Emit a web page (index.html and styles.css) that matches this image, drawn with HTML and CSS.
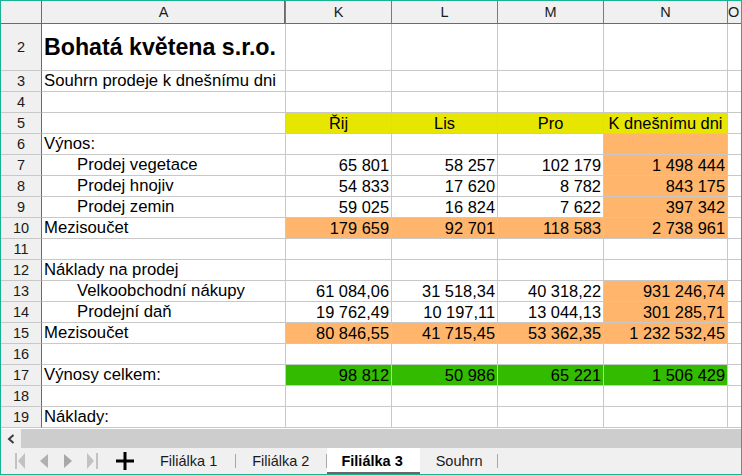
FILE: index.html
```html
<!DOCTYPE html>
<html lang="cs">
<head>
<meta charset="utf-8">
<title>Bohatá květena s.r.o.</title>
<link rel="stylesheet" href="styles.css">
</head>
<body>
<div class="app">
  <div class="sheet">
    <div class="corner"></div>
    <div class="ch frz">A</div><div class="ch">K</div><div class="ch">L</div><div class="ch">M</div><div class="ch">N</div><div class="ch last">O</div>

    <div class="rh">2</div><div class="c title">Bohatá květena s.r.o.</div><div class="c"></div><div class="c"></div><div class="c"></div><div class="c"></div><div class="c last"></div>
    <div class="rh">3</div><div class="c">Souhrn prodeje k dnešnímu dni</div><div class="c"></div><div class="c"></div><div class="c"></div><div class="c"></div><div class="c last"></div>
    <div class="rh">4</div><div class="c"></div><div class="c"></div><div class="c"></div><div class="c"></div><div class="c"></div><div class="c last"></div>
    <div class="rh">5</div><div class="c"></div><div class="c ctr yel">Řij</div><div class="c ctr yel">Lis</div><div class="c ctr yel">Pro</div><div class="c ctr yel">K dnešnímu dni</div><div class="c last"></div>
    <div class="rh">6</div><div class="c">Výnos:</div><div class="c"></div><div class="c"></div><div class="c"></div><div class="c org"></div><div class="c last"></div>
    <div class="rh">7</div><div class="c ind">Prodej vegetace</div><div class="c num">65&nbsp;801</div><div class="c num">58&nbsp;257</div><div class="c num">102&nbsp;179</div><div class="c num org">1&nbsp;498&nbsp;444</div><div class="c last"></div>
    <div class="rh">8</div><div class="c ind">Prodej hnojiv</div><div class="c num">54&nbsp;833</div><div class="c num">17&nbsp;620</div><div class="c num">8&nbsp;782</div><div class="c num org">843&nbsp;175</div><div class="c last"></div>
    <div class="rh">9</div><div class="c ind">Prodej zemin</div><div class="c num">59&nbsp;025</div><div class="c num">16&nbsp;824</div><div class="c num">7&nbsp;622</div><div class="c num org">397&nbsp;342</div><div class="c last"></div>
    <div class="rh">10</div><div class="c">Mezisoučet</div><div class="c num org">179&nbsp;659</div><div class="c num org">92&nbsp;701</div><div class="c num org">118&nbsp;583</div><div class="c num org">2&nbsp;738&nbsp;961</div><div class="c last"></div>
    <div class="rh">11</div><div class="c"></div><div class="c"></div><div class="c"></div><div class="c"></div><div class="c"></div><div class="c last"></div>
    <div class="rh">12</div><div class="c">Náklady na prodej</div><div class="c"></div><div class="c"></div><div class="c"></div><div class="c"></div><div class="c last"></div>
    <div class="rh">13</div><div class="c ind">Velkoobchodní nákupy</div><div class="c num">61&nbsp;084,06</div><div class="c num">31&nbsp;518,34</div><div class="c num">40&nbsp;318,22</div><div class="c num org">931&nbsp;246,74</div><div class="c last"></div>
    <div class="rh">14</div><div class="c ind">Prodejní daň</div><div class="c num">19&nbsp;762,49</div><div class="c num">10&nbsp;197,11</div><div class="c num">13&nbsp;044,13</div><div class="c num org">301&nbsp;285,71</div><div class="c last"></div>
    <div class="rh">15</div><div class="c">Mezisoučet</div><div class="c num org">80&nbsp;846,55</div><div class="c num org">41&nbsp;715,45</div><div class="c num org">53&nbsp;362,35</div><div class="c num org">1&nbsp;232&nbsp;532,45</div><div class="c last"></div>
    <div class="rh">16</div><div class="c"></div><div class="c"></div><div class="c"></div><div class="c"></div><div class="c"></div><div class="c last"></div>
    <div class="rh">17</div><div class="c">Výnosy celkem:</div><div class="c num grn">98&nbsp;812</div><div class="c num grn">50&nbsp;986</div><div class="c num grn">65&nbsp;221</div><div class="c num grn">1&nbsp;506&nbsp;429</div><div class="c last"></div>
    <div class="rh">18</div><div class="c"></div><div class="c"></div><div class="c"></div><div class="c"></div><div class="c"></div><div class="c last"></div>
    <div class="rh">19</div><div class="c">Náklady:</div><div class="c"></div><div class="c"></div><div class="c"></div><div class="c"></div><div class="c last"></div>
  </div>

  <div class="hscroll">
    <div class="sbtn">
      <svg width="8" height="10" viewBox="0 0 8 10"><path d="M6.5 1 L2 5 L6.5 9" fill="none" stroke="#3c3c3c" stroke-width="2"/></svg>
    </div>
    <div class="strack"></div>
  </div>

  <div class="tabbar">
    <div class="navs">
      <div class="nav"><svg width="11" height="16" viewBox="0 0 11 16"><rect x="0" y="0" width="2" height="16" fill="#c2c2c2"/><polygon points="10,0 10,16 3,8" fill="#c2c2c2"/></svg></div>
      <div class="nav"><svg width="10" height="16" viewBox="0 0 10 16"><polygon points="9,1 9,15 1,8" fill="#b0b0b0"/></svg></div>
      <div class="nav"><svg width="10" height="16" viewBox="0 0 10 16"><polygon points="1,1 1,15 9,8" fill="#a8a8a8"/></svg></div>
      <div class="nav"><svg width="11" height="16" viewBox="0 0 11 16"><polygon points="0,0 0,16 7,8" fill="#c2c2c2"/><rect x="9" y="0" width="2" height="16" fill="#c2c2c2"/></svg></div>
      <div class="nav add"><svg width="18" height="18" viewBox="0 0 18 18"><rect x="0" y="7.5" width="18" height="3" fill="#000"/><rect x="7.5" y="0" width="3" height="18" fill="#000"/></svg></div>
    </div>
    <div class="tabs">
      <div class="tab sep t1">Filiálka 1</div>
      <div class="tab sep t2">Filiálka 2</div>
      <div class="tab active">Filiálka 3</div>
      <div class="tab sep t4">Souhrn</div>
    </div>
  </div>
</div>
</body>
</html>
```

FILE: styles.css
```css
* { box-sizing: border-box; }

html, body {
  margin: 0;
  padding: 0;
  background: #ffffff;
}

body {
  font-family: "Liberation Sans", Arial, sans-serif;
  color: #000;
}

.app {
  width: 742px;
  height: 475px;
  border: 1px solid #19b394;
  display: flex;
  flex-direction: column;
  overflow: hidden;
}

.sheet {
  display: grid;
  grid-template-columns: 41px 244px 106px 106px 106px 124px 13px;
  grid-template-rows: 23px 47px repeat(17, 21px);
  flex: none;
}

.corner {
  background: #f0f0f0;
  border-right: 1px solid #6b6b6b;
  border-bottom: 1px solid #6b6b6b;
}

.ch {
  background: #f0f0f0;
  border-right: 1px solid #7a7a7a;
  border-bottom: 1px solid #6b6b6b;
  font-size: 14.5px;
  color: #1a1a1a;
  display: flex;
  align-items: center;
  justify-content: center;
  overflow: hidden;
  white-space: nowrap;
}

.ch.frz {
  box-shadow: inset -1px 0 0 #6b6b6b;
}

.ch.last {
  border-right: none;
  justify-content: flex-start;
}

.rh {
  background: #f0f0f0;
  border-right: 1px solid #6b6b6b;
  border-bottom: 1px solid #c8c8c8;
  font-size: 14.5px;
  color: #1a1a1a;
  display: flex;
  align-items: center;
  justify-content: center;
}

.c {
  border-right: 1px solid #c8c8c8;
  border-bottom: 1px solid #c8c8c8;
  font-size: 16.7px;
  padding: 0 2px;
  display: flex;
  align-items: center;
  white-space: nowrap;
  overflow: visible;
}

.c.last {
  border-right: none;
}

.c.title {
  font-size: 23.2px;
  font-weight: bold;
}

.c.ind {
  padding-left: 35px;
}

.c.num {
  justify-content: flex-end;
  font-size: 16.4px;
}

.c.ctr {
  justify-content: center;
  font-size: 16.4px;
}

.yel { background: #e6e600; }
.org { background: #ffb66c; }
.grn { background: #33bb00; }

.hscroll {
  height: 20px;
  display: flex;
  border-top: 1px solid #ffffff;
  flex: none;
}

.sbtn {
  width: 20px;
  background: #f0f0f0;
  display: flex;
  align-items: center;
  justify-content: center;
}

.strack {
  flex: 1;
  background: #cdcdcd;
}

.tabbar {
  flex: 1;
  background: #f0f0f0;
  display: flex;
  align-items: stretch;
}

.navs {
  display: flex;
  align-items: center;
  padding-left: 7px;
}

.nav {
  width: 24px;
  display: flex;
  align-items: center;
  justify-content: center;
}

.nav.add {
  margin-left: 9px;
}

.tabs {
  display: flex;
  align-items: stretch;
  margin-left: 7px;
}

.tab {
  font-size: 14.5px;
  color: #1a1a1a;
  display: flex;
  align-items: center;
  position: relative;
  white-space: nowrap;
}

.tab.t1 {
  padding: 0 19px 0 16px;
}

.tab.t2 {
  padding: 0 18px 0 16px;
}

.tab.t4 {
  padding: 0 16px 0 16px;
}

.tab.sep::after {
  content: "";
  position: absolute;
  right: 0;
  top: 6px;
  width: 1px;
  height: 14px;
  background: #a8a8a8;
}

.tab.active {
  background: #ffffff;
  font-weight: bold;
  color: #000;
  padding: 2px 17px 0 14px;
  border-bottom: 2px solid #666666;
}
```
